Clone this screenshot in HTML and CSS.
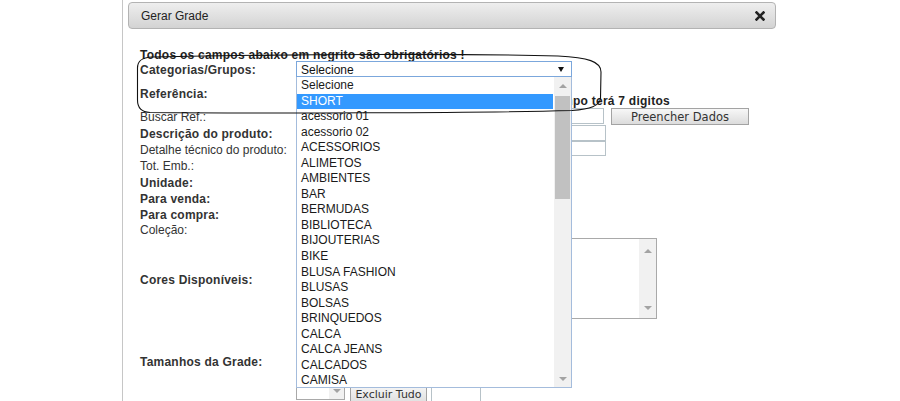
FILE: index.html
```html
<!DOCTYPE html>
<html lang="pt">
<head>
<meta charset="utf-8">
<title>Gerar Grade</title>
<link rel="stylesheet" href="styles.css">
</head>
<body>
<div class="page">
  <div class="rule"></div>
  <div class="dialog">
    <div class="titlebar">
      <span class="title">Gerar Grade</span>
      <svg class="close" width="10" height="10" viewBox="0 0 10 10"><path d="M1.5 1.5 L8.5 8.5 M8.5 1.5 L1.5 8.5" stroke="#222" stroke-width="2.6" stroke-linecap="square"/></svg>
    </div>
    <div class="content">
      <p class="notice">Todos os campos abaixo em negrito são obrigatórios !</p>
      <div class="form">
        <div class="label b">Categorias/Grupos:</div>
        <div class="field select-cell">
          <div class="select"><span>Selecione</span><i class="caret"></i></div>
          <div class="dropdown">
            <ul class="options">
              <li>Selecione</li>
              <li class="active">SHORT</li>
              <li>acessorio 01</li>
              <li>acessorio 02</li>
              <li>ACESSORIOS</li>
              <li>ALIMETOS</li>
              <li>AMBIENTES</li>
              <li>BAR</li>
              <li>BERMUDAS</li>
              <li>BIBLIOTECA</li>
              <li>BIJOUTERIAS</li>
              <li>BIKE</li>
              <li>BLUSA FASHION</li>
              <li>BLUSAS</li>
              <li>BOLSAS</li>
              <li>BRINQUEDOS</li>
              <li>CALCA</li>
              <li>CALCA JEANS</li>
              <li>CALCADOS</li>
              <li>CAMISA</li>
            </ul>
            <div class="vscroll">
              <div class="sbtn"><i class="up"></i></div>
              <div class="thumb"></div>
              <div class="track"></div>
              <div class="sbtn"><i class="down"></i></div>
            </div>
          </div>
        </div>

        <div class="label b">Referência:</div>
        <div class="field stack">
          <div class="input w200"></div>
          <div class="hint"><span class="hint-hidden">Se a referência for digitada, o cam</span><span>po terá 7 digitos</span></div>
        </div>

        <div class="label">Buscar Ref.:</div>
        <div class="field row">
          <div class="input w308"></div>
          <button class="btn btn-fill">Preencher Dados</button>
        </div>

        <div class="label b">Descrição do produto:</div>
        <div class="field top1"><div class="input w310"></div></div>

        <div class="label">Detalhe técnico do produto:</div>
        <div class="field"><div class="input w310 h15"></div></div>

        <div class="label">Tot. Emb.:</div>
        <div class="field"><div class="input w100"></div></div>

        <div class="label b">Unidade:</div>
        <div class="field"><div class="input w100"></div></div>

        <div class="label b">Para venda:</div>
        <div class="field"><div class="input w100"></div></div>

        <div class="label b">Para compra:</div>
        <div class="field"><div class="input w100"></div></div>

        <div class="label">Coleção:</div>
        <div class="field"><div class="input w200"></div></div>

        <div class="label b">Cores Disponíveis:</div>
        <div class="field top1">
          <div class="textarea">
            <div class="ta-scroll"><i class="up"></i><i class="down"></i></div>
          </div>
        </div>

        <div class="label b">Tamanhos da Grade:</div>
        <div class="field sizes">
          <div class="listbox"><div class="lb-scroll"><i class="down"></i></div></div>
          <button class="btn btn-del">Excluir Tudo</button>
          <div class="input w50 h20"></div>
        </div>
      </div>
    </div>
  </div>
</div>
<svg class="annot" width="900" height="401" viewBox="0 0 900 401">
  <path d="M152 57 C300 54 470 53.5 558 56 C588 57.5 601 61.5 601 72 L600.5 98 C600 106 590 109 572 110.5 C480 113 260 113.5 150 112.5 C141 112 137.5 108 137.5 100 L137.5 68 C137.5 60.5 142 57.5 152 57 Z" fill="none" stroke="#111" stroke-width="1.1"/>
</svg>
</body>
</html>
```

FILE: styles.css
```css
html, body {
  margin: 0;
  padding: 0;
  height: 100%;
  overflow: hidden;
  background: #fff;
}
body {
  position: relative;
  font-family: "Liberation Sans", Arial, sans-serif;
  font-size: 12px;
  color: #333;
}
.page {
  display: flex;
  height: 401px;
  padding-left: 122px;
}
.rule {
  flex: none;
  width: 1px;
  background: #c6c6c6;
}
.dialog {
  flex: none;
  width: 648px;
  margin-left: 5px;
  padding-top: 2px;
}
.titlebar {
  height: 25px;
  border: 1px solid #b3b3b3;
  border-radius: 4px;
  background: linear-gradient(#eeeeee, #d3d3d3);
  display: flex;
  align-items: center;
  justify-content: space-between;
  padding: 0 10px 0 12px;
  color: #222;
}
.title {
  font-size: 12px;
  padding-top: 1px;
}
.close {
  display: block;
}
.content {
  padding-left: 12px;
}
.notice {
  margin: 19px 0 -1px;
  line-height: 14px;
  font-weight: bold;
  letter-spacing: 0.25px;
  color: #222;
}
.form {
  display: grid;
  grid-template-columns: 156px 1fr;
  grid-template-rows: 16px 31px 16px 17px 16px 16px 17px 16px 15px 16px 83px 82px;
}
.label {
  align-self: center;
  line-height: 14px;
  padding-top: 2px;
  white-space: nowrap;
}
.label.b {
  font-weight: bold;
  letter-spacing: 0.22px;
}
.field {
  align-self: start;
}
.field.top1 {
  padding-top: 1px;
}
.field.row {
  display: flex;
  align-items: flex-start;
}
.field.stack {
  display: flex;
  flex-direction: column;
}
.select-cell {
  position: relative;
}
.select {
  box-sizing: border-box;
  width: 276px;
  height: 16px;
  border: 1px solid #7ba7dc;
  background: #fff;
  display: flex;
  align-items: center;
  justify-content: space-between;
  padding: 1px 7px 0 4px;
  color: #111;
  line-height: 14px;
}
.caret {
  width: 0;
  height: 0;
  border-left: 3.5px solid transparent;
  border-right: 3.5px solid transparent;
  border-top: 5px solid #111;
}
.dropdown {
  position: absolute;
  left: 0;
  top: 16px;
  z-index: 5;
  box-sizing: border-box;
  width: 276px;
  height: 311px;
  border: 1px solid #a4bcdc;
  border-top: none;
  background: #fff;
  display: flex;
  overflow: hidden;
}
.options {
  flex: 1;
  margin: 0;
  padding: 1px 0 0;
  list-style: none;
  color: #1a1a1a;
}
.options li {
  height: 15.55px;
  line-height: 15.55px;
  padding-left: 4px;
  white-space: nowrap;
}
.options li.active {
  background: #3399ff;
  color: #fff;
  margin-right: 1px;
}
.vscroll {
  flex: none;
  width: 17px;
  background: #f1f1f1;
  display: flex;
  flex-direction: column;
  align-items: center;
}
.sbtn {
  height: 17px;
  width: 17px;
  display: flex;
  align-items: center;
  justify-content: center;
}
.thumb {
  width: 15px;
  height: 103px;
  background: #c1c1c1;
  margin-top: 2px;
}
.track {
  flex: 1;
}
.up, .down {
  display: block;
  width: 0;
  height: 0;
  border-left: 4px solid transparent;
  border-right: 4px solid transparent;
}
.up {
  border-bottom: 4px solid #a3a3a3;
}
.down {
  border-top: 4px solid #a3a3a3;
}
.input {
  box-sizing: border-box;
  height: 16px;
  border: 1px solid #b7c2c8;
  background: #fff;
}
.input.h15 { height: 15px; }
.input.h20 { height: 20px; }
.w50 { width: 50px; }
.w100 { width: 100px; }
.w200 { width: 200px; }
.w308 { width: 308px; }
.w310 { width: 310px; }
.hint {
  display: flex;
  white-space: nowrap;
  font-weight: bold;
  letter-spacing: 0.25px;
  line-height: 15px;
  padding-top: 1px;
  color: #222;
}
.hint-hidden {
  flex: none;
  width: 277px;
  overflow: hidden;
  text-align: right;
}
.btn {
  box-sizing: border-box;
  margin: 0;
  padding: 0;
  border: 1px solid #a3a3a3;
  background: linear-gradient(#f7f7f7, #dcdcdc);
  color: #333;
  font-family: "DejaVu Sans", Verdana, sans-serif;
}
.btn-fill {
  margin-left: 7px;
  width: 138px;
  height: 17px;
  font-size: 11.5px;
  line-height: 14px;
}
.btn-del {
  width: 77px;
  height: 22px;
  font-size: 11px;
  line-height: 14px;
  margin-left: 5px;
}
.textarea {
  box-sizing: border-box;
  width: 361px;
  height: 81px;
  border: 1px solid #a9a9a9;
  background: #fff;
  display: flex;
  justify-content: flex-end;
}
.ta-scroll {
  width: 17px;
  background: #f1f1f1;
  display: flex;
  flex-direction: column;
  align-items: center;
  justify-content: space-between;
  padding: 10px 0 8px;
}
.sizes {
  display: flex;
  align-items: flex-start;
  padding-top: 64px;
}
.sizes .input {
  margin-left: 4px;
  margin-top: 2px;
}
.listbox {
  box-sizing: border-box;
  width: 49px;
  height: 16px;
  border: 1px solid #a9a9a9;
  border-top: none;
  background: #fff;
  display: flex;
  justify-content: flex-end;
}
.lb-scroll {
  width: 15px;
  background: #f1f1f1;
  display: flex;
  justify-content: center;
  padding-top: 5px;
}
.annot {
  position: absolute;
  left: 0;
  top: 0;
  z-index: 10;
  pointer-events: none;
}
```
